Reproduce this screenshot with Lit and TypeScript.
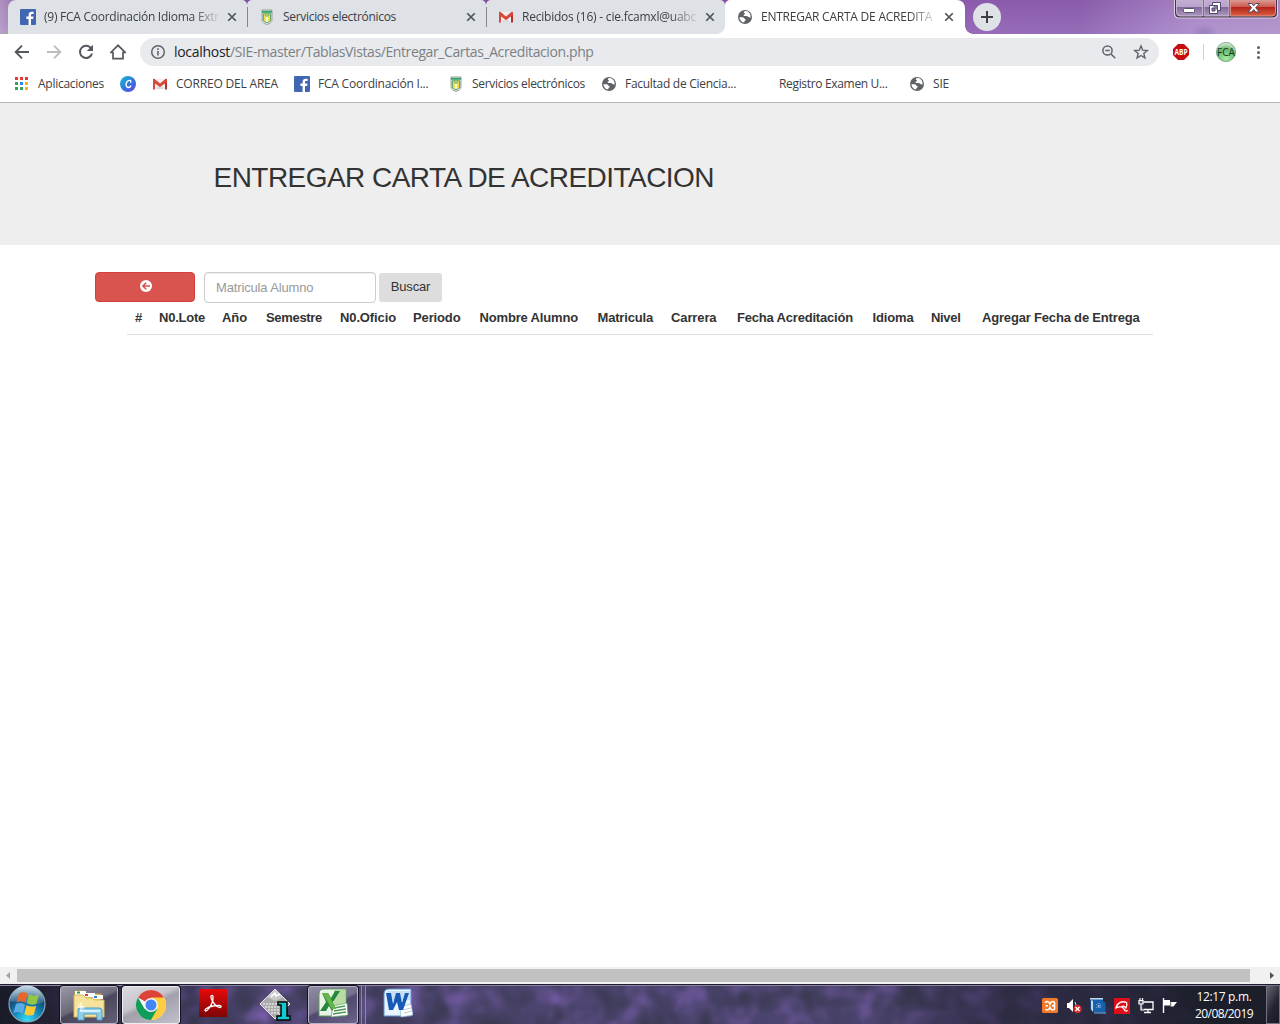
import { LitElement, html, svg, css } from 'lit';
import { customElement, property } from 'lit/decorators.js';

/** Text run whose tracking is adjusted so that it fills a given width. */
@customElement('fit-text')
class FitText extends LitElement {
  @property({ type: Number }) width = 0;
  static styles = css`
    :host { display: inline-block; white-space: pre; }
    .run { display: inline-block; white-space: pre; }
  `;
  firstUpdated() {
    const run = this.renderRoot.querySelector('.run') as HTMLElement;
    const natural = run.getBoundingClientRect().width;
    const count = (this.textContent || '').length;
    if (natural && count) run.style.letterSpacing = `${(this.width - natural) / count}px`;
  }
  render() { return html`<span class="run"><slot></slot></span>`; }
}

const facebook = svg`<rect width="16" height="16" rx="1" fill="#4267b2"/><path d="M11 16V10h2.100l.4-2.500H11V6.200c0-.8.4-1.200 1.300-1.200h1.300V2.800c-.4-.1-1-.1-1.700-.1-2 0-3.300 1.100-3.300 3.200v1.600H6.400V10h2.200v6z" fill="#fff"/>`;
const crest = svg`<path d="M3 1h10v10c0 2-2 3.500-5 4.500C5 14.500 3 13 3 11z" fill="#e9eee9" stroke="#9aa39b" stroke-width="1"/><path d="M3 1.800h10v2H3z" fill="#38a36d"/><path d="M4.300 4.800h7.400V11c0 1.200-1.700 2-3.700 2.600C6 13 4.300 12.200 4.300 11z" fill="#ecdf45" stroke="#4a9c70"/><path d="M7.200 7h1.600v6H7.200z" fill="#fdfdf4"/><path d="M6 6l2 1.500L10 6" stroke="#4d9f9b" stroke-width=".9" fill="none"/>`;
const gmail = svg`<path d="M1 3h14v10H1z" fill="#eee"/><path d="M3.500 13 8 9l4.500 4z" fill="#dcdcdc"/><path d="M1 13.500V4l2 1.500v8z" fill="#d54b3d"/><path d="M15 13.500V4l-2 1.500v8z" fill="#b63024"/><path d="M1 6V3.300l1-.7 6 4.800 6-4.800 1 .7V6L8 11z" fill="#d8473a"/>`;
const globe = svg`<circle cx="8" cy="8" r="7" fill="#5f6368"/><path d="M7.500 2.300c-1.200.6-.7 1.700.2 2 .8.300.2 1.200-.7 1.300-.8.200-.4 1.300.5 1.300h2.200c1.400 0 1.400 1.600 3.900 1.500.3-3-1.700-5.800-4.300-6.300zM2.400 8.200h3.300c1.300.1 1.200 1.500 2.200 1.700 1.200.2 1 1.300.2 1.700-.8.400-.7 1.500-1 2-3-.6-4.600-3-4.700-5.400z" fill="#fff"/>`;
const canva = svg`<defs><linearGradient id="cv" x1="0" y1="0" x2="1" y2="1"><stop offset="0" stop-color="#13bdcf"/><stop offset=".5" stop-color="#317bdd"/><stop offset="1" stop-color="#6a3be2"/></linearGradient></defs><circle cx="8" cy="8" r="8" fill="url(#cv)"/><path d="M10.800 6.200c.3-2-1.800-2.400-3.300-1C5.500 7 5.500 11 7.800 11.500c1.300.2 2.400-.6 3-1.500" fill="none" stroke="#fff" stroke-width="1.400" stroke-linecap="round"/>`;
const apps = svg`${[1, 6, 11].map((y, r) => [1, 6, 11].map((x, c) => svg`<rect x=${x} y=${y} width="3" height="3" fill=${[['#e53935', '#e53935', '#e53935'], ['#34a15b', '#2a84ef', '#f6b01b'], ['#34a15b', '#34a15b', '#f6b01b']][r][c]}/>`))}`;
const cross = svg`<path d="M3 3l10 10M13 3L3 13" stroke="#4f5459" stroke-width="2.300" fill="none"/>`;
const back = svg`<path d="M15 8H2M8 1.700 1.700 8 8 14.300" fill="none" stroke="#54585d" stroke-width="1.900"/>`;
const forward = svg`<path d="M1 8h13M8 1.700 14.300 8 8 14.300" fill="none" stroke="#bbbdbf" stroke-width="1.900"/>`;
const reload = svg`<path d="M13.300 4.700A6.100 6.100 0 1 0 14 9.500" fill="none" stroke="#54585d" stroke-width="2"/><path d="M15 .8V7H8.800z" fill="#54585d"/>`;
const home = svg`<path d="M.8 8.500 8 1.300l7.200 7.200H13v6.200H3V8.500z" fill="none" stroke="#54585d" stroke-width="1.700"/>`;
const info = svg`<circle cx="8" cy="8" r="6.300" fill="none" stroke="#5f6368" stroke-width="1.500"/><path d="M8 7v4.500M8 4.300V6" stroke="#5f6368" stroke-width="1.600"/>`;
const lens = svg`<circle cx="6.500" cy="6.500" r="4.600" fill="none" stroke="#5f6368" stroke-width="1.500"/><path d="M4.300 6.500h4.400M10 10l4.300 4.300" stroke="#5f6368" stroke-width="1.500"/>`;
const star = svg`<path d="M8 1.900l1.700 4.300 4.600.3-3.500 3 1.100 4.500L8 11.500 4.100 14l1.100-4.500-3.500-3 4.600-.3z" fill="none" stroke="#5f6368" stroke-width="1.400"/>`;
const abp = svg`<path d="M5 0h6l5 5v6l-5 5H5l-5-5V5z" fill="#c70d0d"/><text x="8" y="10.900" text-anchor="middle" font-family="Open Sans, sans-serif" font-size="8" font-weight="700" fill="#fff" textLength="13" lengthAdjust="spacingAndGlyphs">ABP</text>`;
const kebab = svg`<circle cx="8.500" cy="3.500" r="1.500" fill="#5f6368"/><circle cx="8.500" cy="8.500" r="1.500" fill="#5f6368"/><circle cx="8.500" cy="13.500" r="1.500" fill="#5f6368"/>`;

const icon = (art: unknown, cls = '') => html`<svg class="icon ${cls}" viewBox="0 0 16 16">${art}</svg>`;

const TABS = [
  { art: facebook, label: '(9) FCA Coordinación Idioma Extr', width: 175, fade: true },
  { art: crest, label: 'Servicios electrónicos', width: 113 },
  { art: gmail, label: 'Recibidos (16) - cie.fcamxl@uabc', width: 174, fade: true },
  { art: globe, label: 'ENTREGAR CARTA DE ACREDITA', width: 171, fade: true, active: true },
];

const BOOKMARKS = [
  { art: apps, label: 'Aplicaciones', width: 66 },
  { art: canva, label: '', width: 0 },
  { art: gmail, label: 'CORREO DEL AREA', width: 102 },
  { art: facebook, label: 'FCA Coordinación I...', width: 110.5 },
  { art: crest, label: 'Servicios electrónicos', width: 113 },
  { art: globe, label: 'Facultad de Ciencia...', width: 111 },
  { art: null, label: 'Registro Examen U...', width: 108.5 },
  { art: globe, label: 'SIE', width: 16 },
];

@customElement('browser-chrome')
class BrowserChrome extends LitElement {
  static styles = css`
    :host { display: block; font-family: "Open Sans", "Noto Sans", sans-serif; font-size: 12px; color: #3c4043; }
    .icon { width: 16px; height: 16px; flex: none; display: block; }
    .strip { height: 34px; display: flex; padding-left: 8px; box-sizing: border-box; overflow: hidden;
      background:
        radial-gradient(ellipse 14px 8px at 1204px 32px, #8976b5aa 0, transparent 100%),
        linear-gradient(#7a459a44, #a888cf44),
        linear-gradient(90deg, #bfaacb 0, #9267b0 30px, #8254a5 240px, #8450a5 720px, #9162b2 990px, #8e64b0 1080px, #a27fc2 1140px, #b699d0 1200px, #b79fcd 1280px); }
    .tab { position: relative; width: 239px; height: 34px; display: flex; align-items: center; padding: 0 8px 0 12px; box-sizing: border-box; background: #dee1e6; border-radius: 5px 5px 0 0; }
    .tab.first { border-top-left-radius: 8px; }
    .tab.first::before { content: ""; position: absolute; left: -8px; bottom: 0; width: 8px; height: 8px; background: radial-gradient(circle at 0 0, transparent 7.5px, #a3a5a9 8px); }
    .tab .icon { margin-right: 8px; }
    .tab .close { width: 12px; height: 12px; margin: 0 0 0 7px; }
    .title { flex: none; width: 175px; overflow: hidden; white-space: nowrap; line-height: 20px; }
    .fade { -webkit-mask-image: linear-gradient(90deg, #000 148px, transparent 178px); mask-image: linear-gradient(90deg, #000 148px, transparent 178px); }
    .sep { width: 1px; height: 20px; position: absolute; right: -.5px; top: 7px; background: #83868b; z-index: 1; }
    .tab.active { background: #fff; width: 240px; z-index: 2; border-radius: 5px 8px 0 0; }
    .active::before, .active::after { content: ""; position: absolute; bottom: 0; width: 8px; height: 8px; }
    .active::before { left: -8px; background: radial-gradient(circle at 0 0, transparent 7.5px, #fff 8px); }
    .active::after { right: -8px; background: radial-gradient(circle at 100% 0, transparent 7.5px, #fff 8px); }
    .plus { width: 28px; height: 28px; margin: 3px 0 0 8px; }
    .window { width: 104px; height: 19px; margin: 0 2px 0 auto; }
    .bar { height: 36px; background: #fff; display: flex; align-items: center; }
    .nav { display: flex; gap: 16px; padding: 0 14px; }
    .url { width: 1019px; height: 28px; border-radius: 14px; background: #e8eaed; display: flex; align-items: center; padding: 0 10px; box-sizing: border-box; font-size: 14px; color: #7c8085; }
    .url .text { margin-left: 8px; white-space: nowrap; line-height: 24px; }
    .host { color: #202124; }
    .url .lens { margin-left: auto; }
    .url .star { margin-left: 16px; }
    .abp { margin-left: 14px; }
    .rule { width: 1px; height: 16px; background: #cfd1d4; margin: 0 12px 0 14px; }
    .avatar { width: 20px; height: 20px; }
    .kebab { margin-left: 14px; }
    .marks { height: 33px; border-bottom: 1px solid #b6b6b6; box-sizing: border-box; background: #fff; display: grid; grid-template-columns: 120px 32px 142px 154px 153px 154px 154px 60px; align-items: center; padding-bottom: 4px; }
    .mark { display: flex; align-items: center; gap: 8px; white-space: nowrap; line-height: 20px; }
    .mark:first-child { padding-left: 14px; }
    .gap { width: 16px; }
  `;
  render() {
    return html`
      <div class="strip">
        ${TABS.map((t, i) => html`<div class="tab ${t.active ? 'active' : ''} ${i === 0 ? 'first' : ''}">
          ${icon(t.art)}<div class="title ${t.fade ? 'fade' : ''}"><fit-text width=${t.width}>${t.label}</fit-text></div>${icon(cross, 'close')}
          ${i < 2 ? html`<span class="sep"></span>` : ''}
        </div>`)}
        <svg class="plus" viewBox="0 0 28 28"><circle cx="14" cy="14" r="14" fill="#dee1e6"/><path d="M14 8v12M8 14h12" stroke="#3c4043" stroke-width="2"/></svg>
        <svg class="window" viewBox="0 0 104 19">
          <defs>
            <linearGradient id="wg" x2="0" y2="1"><stop stop-color="#c5afd1"/><stop offset=".48" stop-color="#b9a2cc"/><stop offset=".5" stop-color="#83699d"/><stop offset="1" stop-color="#ad98be"/></linearGradient>
            <linearGradient id="wr" x2="0" y2="1"><stop stop-color="#dda3a0"/><stop offset=".45" stop-color="#cc5c52"/><stop offset=".5" stop-color="#b6251b"/><stop offset="1" stop-color="#d75e42"/></linearGradient>
          </defs>
          <path d="M0-1v14.500q0 5 5 5h94q5 0 5-5V-1z" fill="#ddd0e5"/>
          <path d="M1-1v14q0 4.500 4.500 4.500h93q4.500 0 4.500-4.500V-1z" fill="#43334f"/>
          <path d="M2.500-1H28.500v17H6q-3.500 0-3.500-3.500zM30-1h25v17H30z" fill="url(#wg)" stroke="#d7c9df" stroke-width=".8"/>
          <path d="M56.500-1h45v13.500q0 3.500-3.500 3.500H56.500z" fill="url(#wr)" stroke="#eda89b" stroke-width=".8"/>
          <rect x="9.500" y="8.500" width="11" height="4" rx="1" fill="#fff" stroke="#58536b"/>
          <path d="M38.500 2.500h8v8h-3v3h-8v-8h3z" fill="#fff" stroke="#50496a"/><path d="M38.500 5.500h5v5M38 8h3v3h-3z" fill="#8b75a4" stroke="#50496a"/>
          <path d="M74 3.500h3.700l2 2.400 2-2.400h3.600l-3.600 4.300 3.600 4.200h-3.600l-2-2.400-2 2.400H74l3.600-4.200z" fill="#fff" stroke="#544a5c"/>
        </svg>
      </div>
      <div class="bar">
        <div class="nav">${icon(back)}${icon(forward)}${icon(reload)}${icon(home)}</div>
        <div class="url">${icon(info)}
          <span class="text"><fit-text class="host" width="56">localhost</fit-text><fit-text width="363.500">/SIE-master/TablasVistas/Entregar_Cartas_Acreditacion.php</fit-text></span>
          ${icon(lens, 'lens')}${icon(star, 'star')}
        </div>
        ${icon(abp, 'abp')}<span class="rule"></span>
        <svg class="avatar" viewBox="0 0 20 20"><defs><radialGradient id="av" cx=".5" cy=".85" r=".85"><stop stop-color="#a5eda5"/><stop offset=".6" stop-color="#67b56e"/><stop offset="1" stop-color="#e5f0e5"/></radialGradient></defs><circle cx="10" cy="10" r="9.600" fill="url(#av)" stroke="#5c9169" stroke-width=".7"/><text x="10" y="13.500" text-anchor="middle" font-family="Open Sans, sans-serif" font-size="10" fill="#173a1e" textLength="18" lengthAdjust="spacingAndGlyphs">FCA</text></svg>
        ${icon(kebab, 'kebab')}
      </div>
      <div class="marks">${BOOKMARKS.map(b => html`<div class="mark">${b.art ? icon(b.art) : html`<span class="gap"></span>`}${b.label ? html`<fit-text width=${b.width}>${b.label}</fit-text>` : ''}</div>`)}</div>`;
  }
}

const COLUMNS: [string, number][] = [
  ['#', 7], ['N0.Lote', 46], ['Año', 25], ['Semestre', 56], ['N0.Oficio', 56], ['Periodo', 47.5], ['Nombre Alumno', 98.5],
  ['Matricula', 55.5], ['Carrera', 45.5], ['Fecha Acreditación', 116], ['Idioma', 41], ['Nivel', 29.5], ['Agregar Fecha de Entrega', 157.5],
];

@customElement('delivery-page')
class DeliveryPage extends LitElement {
  static styles = css`
    :host { display: flex; flex-direction: column; font-family: "Liberation Sans", Arial, sans-serif; font-size: 13px; color: #333; background: #fff; }
    .hero { height: 142px; background: #eee; padding: 58px 0 0 213.5px; box-sizing: border-box; }
    h1 { margin: 0; font-size: 28px; line-height: 33px; font-weight: 400; }
    .form { display: flex; margin: 27px 0 0 95px; height: 31px; }
    .back { width: 100px; height: 30px; border: 1px solid #d43f3a; border-radius: 4px; background: #d9534f; padding: 0; display: grid; place-items: center; }
    .back svg { width: 12px; height: 12px; display: block; margin: -2px 0 0 1px; }
    input { width: 172px; height: 31px; margin: 0 3px 0 9px; padding: 0 11px; box-sizing: border-box; border: 1px solid #ccc; border-radius: 4px; font: inherit; box-shadow: inset 0 1px 1px #00000013; letter-spacing: -.15px; }
    input::placeholder { color: #999; opacity: 1; }
    .find { width: 63px; height: 29px; margin-top: 1px; border: 0; border-radius: 3px; background: #ddd; color: #333; font: inherit; padding: 0 0 2px; }
    .head { display: grid; grid-template-columns: 24px 63px 44px 74px 73px 66.5px 118px 73.5px 66px 135.5px 58.5px 51px 1fr; margin-left: 127px; width: 1026px; height: 32px; padding: 7px 0 0 8px; box-sizing: border-box; border-bottom: 1px solid #ddd; font-weight: 700; line-height: 16px; white-space: nowrap; }
    .grow { flex: 1; }
    .scroll { height: 17px; background: #f1f1f1; display: grid; grid-template-columns: 17px 1233px 30px; align-items: center; }
    .thumb { height: 13px; background: #c1c1c1; }
    .scroll svg { width: 17px; height: 17px; display: block; }
    .scroll svg:last-child { margin-left: 13px; }
  `;
  render() {
    return html`
      <div class="hero"><h1><fit-text width="500.500">ENTREGAR CARTA DE ACREDITACION</fit-text></h1></div>
      <div class="form">
        <button class="back" aria-label="Regresar"><svg viewBox="0 0 12 12"><circle cx="6" cy="6" r="6" fill="#fff"/><path d="M10 6H3M6.200 2.700 2.900 6l3.300 3.300" fill="none" stroke="#d9534f" stroke-width="1.600"/></svg></button>
        <input placeholder="Matricula Alumno">
        <button class="find"><fit-text width="39.500">Buscar</fit-text></button>
      </div>
      <div class="head">${COLUMNS.map(([label, width]) => html`<div><fit-text width=${width}>${label}</fit-text></div>`)}</div>
      <div class="grow"></div>
      <div class="scroll"><svg viewBox="0 0 17 17"><path d="M10 5v7L6 8.500z" fill="#a3a3a3"/></svg><div class="thumb"></div><svg viewBox="0 0 17 17"><path d="M7 5v7l4-3.500z" fill="#505050"/></svg></div>`;
  }
}

@customElement('task-bar')
class TaskBar extends LitElement {
  static styles = css`
    :host { display: grid; height: 40px; box-sizing: border-box; border-top: 1px solid #211c30; overflow: hidden; color: #fff; font-family: "Open Sans", "Noto Sans", sans-serif; font-size: 12px; background: #48426a; }
    .haze, .row { grid-area: 1 / 1; }
    .haze { width: 1280px; height: 39px; }
    .row { display: flex; align-items: center; height: 39px; box-sizing: border-box; z-index: 1; box-shadow: inset 0 1px #8b83a0;
      background: linear-gradient(90deg, #1a1b28 0, #1d1d2ccc 70px, #2a264066 150px, transparent 260px, transparent 860px, #1d1c2c88 1010px, #1b1d2acc 1150px, #1c1e2a 1210px); }
    svg { display: block; flex: none; }
    .orb { width: 40px; height: 40px; margin-left: 7px; margin-top: -1px; }
    .btn { width: 58px; height: 38px; box-sizing: border-box; border: 1px solid #b9b4c4; border-radius: 3px; display: grid; place-items: center; flex: none; background: linear-gradient(155deg, #9a98a6 0, #84818fbb 46%, #5b586ba0 52%, #77748ab0); box-shadow: 0 0 0 1px #15131f; }
    .btn svg { width: 34px; height: 32px; }
    .files { margin-left: 13px; }
    .chrome { margin-left: 4px; border-color: #eee; background: linear-gradient(155deg, #dcdbe0 0, #c6c5cd 40%, #a2a1ab 50%, #c2c0ca); }
    .pdf { width: 28px; height: 28px; margin: -4px 0 0 19px; }
    .disk { width: 34px; height: 34px; margin-left: 31px; margin-top: -1px; }
    .excel { width: 50px; margin-left: 16px; background: linear-gradient(155deg, #a79fb8cc 0, #8d84a0aa 46%, #5a507688 52%, #77709399); }
    .excel svg { margin-top: -3px; }
    .stack { width: 3px; height: 38px; border-right: 1px solid #8f86a6; background: #5a507888; box-sizing: border-box; margin-left: 1px; }
    .word { width: 30px; height: 30px; margin: -3px 0 0 17px; }
    .tray { display: grid; grid-template-columns: repeat(6, 16px); gap: 8px; margin: 2px 0 0 auto; }
    .tray svg { width: 16px; height: 16px; }
    .clock { width: 64px; margin: 1px 10px 0 14px; text-align: center; line-height: 17px; }
    .clock div { height: 17px; }
    .peek { width: 14px; height: 39px; box-sizing: border-box; border: 1px solid #737280; background: linear-gradient(120deg, #656670, #242633 55%, #171923); flex: none; }
  `;
  render() {
    return html`
      <svg class="haze" viewBox="0 0 1280 39">
        <defs><filter id="hz" x="0" y="0" width="1" height="1" color-interpolation-filters="sRGB"><feTurbulence type="fractalNoise" baseFrequency=".04" numOctaves="2" seed="7"/><feColorMatrix values="0 0 0 0 .46  0 0 0 0 .36  0 0 0 0 .65  2.200 0 0 0 -.9"/></filter>
        <filter id="dk" x="0" y="0" width="1" height="1" color-interpolation-filters="sRGB"><feTurbulence type="fractalNoise" baseFrequency=".04" numOctaves="2" seed="21"/><feColorMatrix values="0 0 0 0 .22  0 0 0 0 .22  0 0 0 0 .31  2 0 0 0 -.75"/></filter></defs>
        <rect width="1280" height="39" fill="#4b446e"/><rect width="1280" height="39" filter="url(#hz)"/><rect width="1280" height="39" filter="url(#dk)"/>
      </svg>
      <div class="row">
      <svg class="orb" viewBox="0 0 40 40">
        <defs><radialGradient id="orb" cx=".5" cy=".95" r=".9"><stop stop-color="#37e0fa"/><stop offset=".4" stop-color="#138abd"/><stop offset=".75" stop-color="#154876"/><stop offset="1" stop-color="#6c93ac"/></radialGradient><linearGradient id="gl" x2="0" y2="1"><stop stop-color="#d9e9f2" stop-opacity=".85"/><stop offset="1" stop-color="#6d9ab9" stop-opacity=".35"/></linearGradient></defs>
        <circle cx="20" cy="20" r="18" fill="url(#orb)" stroke="#86a5b8" stroke-width="1.200"/>
        <path d="M3.500 18a16.500 16.500 0 0 1 33 0q-8 4-16.500 1T3.500 18z" fill="url(#gl)"/>
        <path d="M12 9.500q4.500-2.500 8.500.2l-2.300 9q-4-2.500-8.700-.3z" fill="#e9652b"/><path d="M22 10.300q4.500 2.500 10 .3l-2.500 9.200q-5 2-9.700-.7z" fill="#91c745"/><path d="M9 20q4.800-2 9 .4l-2.200 9q-4.500-2.500-9.300-.4z" fill="#5cabe4"/><path d="M19.500 21.200q4.800 2.400 9.700.5l-2.400 9q-5 2-9.500-.5z" fill="#fac737"/>
      </svg>
      <div class="btn files"><svg viewBox="0 0 34 32">
        <path d="M3 2h9l2 3h15v21H3z" fill="#e9cc70" stroke="#c4a351"/><path d="M3 2h11v4H3z" fill="#fff"/><path d="M5 2.500h3v2H5z" fill="#16a135"/><path d="M12 4h11v4H12z" fill="#fff"/><path d="M13 5h3v2h-3z" fill="#d8432f"/><path d="M21 6h10v4H21z" fill="#fff"/><path d="M22 7h3v2h-3z" fill="#2a87d5"/>
        <path d="M2 6h9l3 3h7l2 2h9v17H2z" fill="#f6e29b" stroke="#d7b85f"/><path d="M6 31V21q0-2 2-2h19q3 0 3 2v10h-5v-6H12v6z" fill="#8fcdea" stroke="#4b9fc4"/><path d="M8 22h20" stroke="#d6f2fc" stroke-width="2"/><path d="M9 13v9M5 18h8M6 14.500l6 6" stroke="#fff" stroke-width="1"/>
      </svg></div>
      <div class="btn chrome"><svg viewBox="0 0 34 32">
        <circle cx="17" cy="16" r="15" fill="#fff"/><path d="M17 16 4 8.500a15 15 0 0 1 26 0z" fill="#db4437"/><path d="M17 16V8.500h13A15 15 0 0 1 17 31l6-11z" fill="#ffcd40"/><path d="M10.500 19.700 4 8.500A15 15 0 0 0 17 31l6.400-11.200z" fill="#109d58"/><circle cx="17" cy="16" r="7" fill="#f3f3f3"/><circle cx="17" cy="16" r="5.500" fill="#4285f4"/>
      </svg></div>
      <svg class="pdf" viewBox="0 0 28 28"><defs><linearGradient id="pdf" x2="0" y2="1"><stop stop-color="#e90909"/><stop offset="1" stop-color="#7d0505"/></linearGradient></defs><path d="M0 0h28v28H0z" fill="url(#pdf)"/><path d="M12.500 6.500c2-.6 1.800 3 1 6-1.200 4-4.500 9.500-7 9.500-2-1 2-4 7.500-5s8-1 8.200.7c-.4 1.800-4 .3-6.500-2.500s-5-8-3.200-8.700z" fill="none" stroke="#fff" stroke-width="1.300"/></svg>
      <svg class="disk" viewBox="0 0 34 34"><path d="M2 17 17 2l15 15-15 15z" fill="#a9a9a9" stroke="#eee"/><path d="M9 10l8-8 8 8-8 4z" fill="#cacaca"/><path d="M5 17h21M7 20h17M10 23h13M13 26h8" stroke="#fff" stroke-width="1.200" stroke-dasharray="2 1"/><path d="m13 10 4-4 1 3 4-2" fill="none" stroke="#fff" stroke-width="1.500"/><path d="M20 15h9v14h3v4H19v-4h4V18h-3z" fill="#10cbd1" stroke="#050505" stroke-width="1.500"/></svg>
      <div class="btn excel"><svg viewBox="0 0 34 32"><path d="M8 2h22v27H3V7q0-5 5-5z" fill="#e8f5e6" stroke="#5c9c5c"/><path d="M18 3h11v15H18z" fill="#b9dca5"/><path d="m17 19 14-3 1 12-17 2z" fill="#fff" stroke="#629f64" stroke-width=".7"/><path d="m18 21 11-2M18 24l12-2M17 27l13-2" stroke="#4b9851" stroke-width="1.300"/><path d="M6 6h6l3 5 4-7h5l-7 11 2 5-3 4-3-5-3 5H4l6-9z" fill="#25883b"/><path d="m6 6 10 16h4L12 6z" fill="#66b64c"/></svg></div>
      <span class="stack"></span><span class="stack"></span>
      <svg class="word" viewBox="0 0 30 30"><path d="M6 1h22v27H1V6q0-5 5-5z" fill="#e9f4ff" stroke="#5b91cf"/><path d="M4 3h23v9H4z" fill="#c6e0f7"/><path d="m17 19 11-3 2 11-12 2z" fill="#fff" stroke="#97b9da" stroke-width=".7"/><path d="m20 22 8-2m-7 5 8-2" stroke="#bdcada"/><path d="M3 5h5l2 11 3-11h4l2 10 3-10h4l-6 17h-4l-2-8-4 8H6z" fill="#1859b6"/></svg>
      <div class="tray">
        <svg viewBox="0 0 16 16"><rect width="16" height="15" rx="1.500" fill="#f27a27"/><path d="M3.500 5q0-1.500 1.800-1.500Q7 3.500 8 6q1-2.500 2.700-2.500 1.800 0 1.800 1.500v6q0 1-1.800 1Q9 12 8 9.500 7 12 5.300 12q-1.800 0-1.800-1M3.500 7.700H6m4 0h2.500" fill="none" stroke="#fff" stroke-width="1.600"/></svg>
        <svg viewBox="0 0 16 16"><path d="M1 5h2l4-4v13l-4-4H1z" fill="#fff"/><path d="M9 4q2 3 0 6" fill="none" stroke="#ddd"/><circle cx="11.500" cy="11" r="4.200" fill="#d52b2b"/><path d="m9.500 9 4 4m0-4-4 4" stroke="#fff" stroke-width="1.400"/></svg>
        <svg viewBox="0 0 16 16"><path d="M.5.500H13v3l2.500 1v10H4.500L.5 12z" fill="#1761ae"/><path d="M0 0h13v1.500H0zM1 2v9l2 3V3z" fill="#c3d9e9"/><path d="M4 15h12" stroke="#7fb2dc"/><path d="M9 5v6M6.500 6.500l5 3m-5 0 5-3" stroke="#b7dbf5" stroke-dasharray="1 1"/></svg>
        <svg viewBox="0 0 16 16"><path d="M0 0h16v16H0z" fill="#df0f19"/><path d="M2 10C3 5 8 2.500 12.500 4.500c1 2.500.5 4-.5 5.500-1.500-2-3-2.500-5-1-1.500-.5-3-.2-5 1zM8 8.500l3 4q1.500 1.200 2.500-.3" fill="none" stroke="#fff" stroke-width="1.300"/></svg>
        <svg viewBox="0 0 16 16"><path d="M5.500 4h9.500v7.500H5.500M10 12v2m-4 .5h7" fill="none" stroke="#fff" stroke-width="1.300"/><path d="M1 2.500h4V6H1zM2 0v2.500M4.500 0v2.500M3 6v6h3" fill="#55556a" stroke="#fff" stroke-width="1.200"/></svg>
        <svg viewBox="0 0 16 16"><path d="M1.500 0v15" stroke="#fff" stroke-width="1.400"/><path d="M2 2h6v2h7l-2 2.500-1.500 2H8.500V7.500H2z" fill="#fff"/><path d="M8.700 3v5" stroke="#444" stroke-width=".8"/></svg>
      </div>
      <div class="clock"><div><fit-text width="55">12:17 p.m.</fit-text></div><div><fit-text width="58">20/08/2019</fit-text></div></div>
      <div class="peek"></div>
      </div>`;
  }
}

@customElement('app-root')
class AppRoot extends LitElement {
  static styles = css`
    :host { display: grid; width: 1280px; height: 1024px; grid-template-rows: 103px 881px 40px; overflow: hidden; background: #fff; }
  `;
  render() { return html`<browser-chrome></browser-chrome><delivery-page></delivery-page><task-bar></task-bar>`; }
}
